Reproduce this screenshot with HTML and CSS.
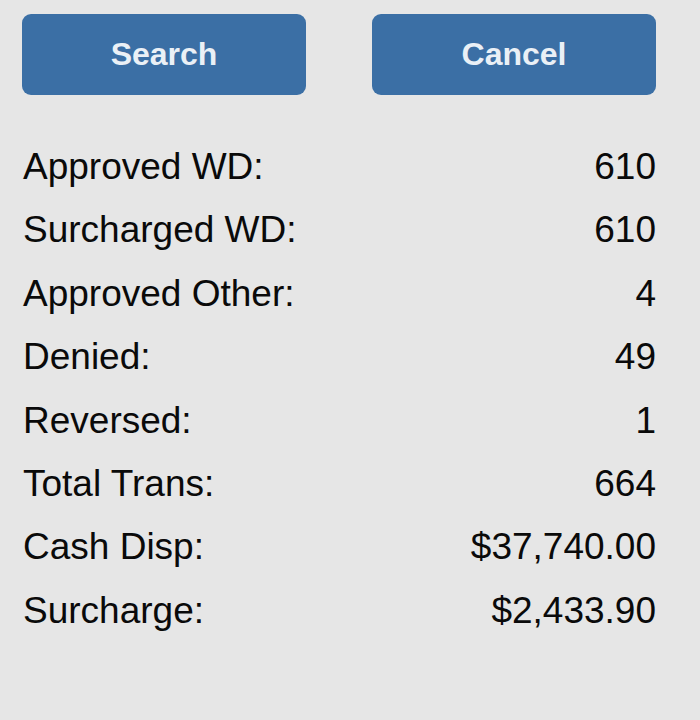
FILE: index.html
```html
<!DOCTYPE html>
<html lang="en">
<head>
    <meta charset="UTF-8">
    <meta name="viewport" content="width=device-width, initial-scale=1.0">
    <title>Transaction Summary</title>
    <link rel="stylesheet" href="styles.css">
</head>
<body>
    <div class="container">
        <div class="actions">
            <button class="btn" id="searchButton">Search</button>
            <button class="btn" id="cancelButton">Cancel</button>
        </div>
        <div class="summary">
            <div class="summary-row"><span>Approved WD:</span><span>610</span></div>
            <div class="summary-row"><span>Surcharged WD:</span><span>610</span></div>
            <div class="summary-row"><span>Approved Other:</span><span>4</span></div>
            <div class="summary-row"><span>Denied:</span><span>49</span></div>
            <div class="summary-row"><span>Reversed:</span><span>1</span></div>
            <div class="summary-row"><span>Total Trans:</span><span>664</span></div>
            <div class="summary-row"><span>Cash Disp:</span><span>$37,740.00</span></div>
            <div class="summary-row"><span>Surcharge:</span><span>$2,433.90</span></div>
        </div>
    </div>
</body>
</html>
```

FILE: styles.css
```css
body {
    margin: 0;
    font-family: 'Liberation Sans', Arial, sans-serif;
    background-color: #e6e6e6;
    color: #0a0a0a;
    height: 720px;
}

.container {
    padding: 14px 44px 0 22px;
}

.actions {
    display: flex;
    gap: 66px;
}

.btn {
    flex: 1;
    height: 81px;
    border: none;
    border-radius: 9px;
    background-color: #3b6fa5;
    color: #eaf0f6;
    font-family: 'Liberation Sans', Arial, sans-serif;
    font-size: 32px;
    font-weight: bold;
    cursor: pointer;
}

.summary {
    margin-top: 40px;
    padding-left: 1px;
}

.summary-row {
    display: flex;
    justify-content: space-between;
    font-size: 37px;
    line-height: 63.4px;
    height: 63.4px;
}
```
